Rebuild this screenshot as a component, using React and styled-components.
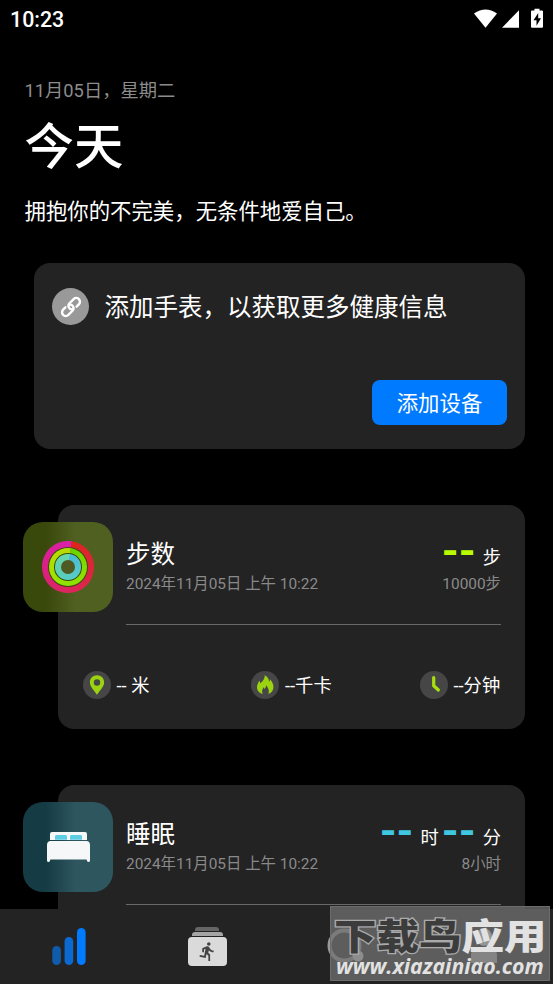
import styled, { createGlobalStyle } from "styled-components";
import { MdDirectionsRun } from "react-icons/md";

const GlobalStyle = createGlobalStyle`
    * {
        box-sizing: border-box;
    }
    body {
        margin: 0;
        background: #000;
    }
`

const Screen = styled.div`
    position: relative;
    display: flex;
    flex-direction: column;
    width: 553px;
    height: 984px;
    overflow: hidden;
    background: #000;
    color: #fff;
    font-family: Roboto, "Noto Sans CJK SC", sans-serif;
    white-space: nowrap;
`

const StatusBar = styled.header`
    display: flex;
    flex: none;
    justify-content: space-between;
    align-items: center;
    height: 38px;
    padding: 0 9px 0 10px;
`
const Clock = styled.span`
    padding-top: 2px;
    font-size: 21.4px;
    font-weight: 500;
    line-height: 36px;
`

const Content = styled.main`
    flex: 1;
    min-height: 0;
    overflow: hidden;
`

const Intro = styled.section`
    padding: 41px 25px 0 24.5px;
`
const DateLine = styled.div`
    height: 24px;
    font-size: 18.3px;
    line-height: 24px;
    color: #8c8c8c;
`
const Title = styled.h1`
    height: 56px;
    margin: 16px 0 0;
    font-size: 49.4px;
    font-weight: 500;
    line-height: 56px;
`
const Quote = styled.p`
    height: 28px;
    margin: 23px 0 0;
    font-size: 21.4px;
    line-height: 28px;
`

const DeviceCard = styled.section`
    display: flex;
    flex-direction: column;
    justify-content: space-between;
    height: 186px;
    margin: 37px 28px 0 34px;
    padding: 25px 18px 24px;
    border-radius: 16px;
    background: #232323;
`
const DeviceRow = styled.div`
    display: flex;
    align-items: center;
    gap: 15.5px;
    height: 37px;
    font-size: 24.5px;
    line-height: 37px;
`
const DeviceText = styled.span`
    padding-top: 1px;
`
const LinkBadge = styled.span`
    display: flex;
    flex: none;
    justify-content: center;
    align-items: center;
    width: 37px;
    height: 37px;
    border-radius: 50%;
    background: #999;
`
const AddButton = styled.button`
    align-self: flex-end;
    width: 135px;
    height: 45px;
    padding: 2px 0 0;
    border: 0;
    border-radius: 8px;
    background: #007aff;
    color: #fff;
    font-family: inherit;
    font-size: 21.4px;
    line-height: 43px;
`

const MetricCard = styled.section`
    height: 224px;
    margin: 56px 28px 0 58px;
    padding: 17px 24px 0 0;
    border-radius: 16px;
    background: #232323;
`
const MetricTop = styled.div`
    display: flex;
    gap: 13px;
    height: 103px;
    margin-left: -35px;
`
const Tile = styled.div`
    display: flex;
    flex: none;
    justify-content: center;
    align-items: center;
    width: 90px;
    height: 90px;
    border-radius: 20px;
    background: linear-gradient(90deg, ${p => p.$from} 0%, ${p => p.$from} 25%, ${p => p.$to} 58%, ${p => p.$to} 100%);
`
const MetricBody = styled.div`
    display: flex;
    flex: 1;
    justify-content: space-between;
    padding-top: 15px;
    border-bottom: 1px solid #686868;
`
const MetricSide = styled.div`
    display: flex;
    flex-direction: column;
    align-items: ${p => p.$right ? "flex-end" : "flex-start"};
`
const MetricName = styled.h2`
    height: 35px;
    margin: 0;
    font-size: 24.5px;
    font-weight: 400;
    line-height: 36px;
`
const MetricNote = styled.div`
    height: 24px;
    font-size: 15.4px;
    line-height: 25px;
    color: #8a8a8a;
`
const MetricValue = styled.div`
    display: flex;
    align-items: center;
    height: 35px;
    font-size: 18.3px;
`
const Unit = styled.span`
    padding-top: 7px;
    line-height: 28px;
`
const Dashes = styled.b`
    margin: 0 7px 8px 3px;
    font-size: 43px;
    line-height: 30px;
    color: ${p => p.$color};
`

const Stats = styled.div`
    display: grid;
    grid-template-columns: 168.5px 168.5px auto;
    padding: 46px 0 0 24.5px;
`
const Stat = styled.div`
    display: flex;
    align-items: center;
    gap: 6px;
    height: 28px;
    font-size: 18.3px;
    line-height: 28px;
`
const StatText = styled.span`
    padding-top: 1px;
`

const Ring = styled.div`
    display: flex;
    flex: none;
    padding: 5.4px;
    border-radius: 50%;
    background: conic-gradient(from 8deg, ${p => p.$colors});
`
const RingGap = styled.div`
    display: flex;
    padding: ${p => p.$hole ? 7.3 : 1.1}px;
    border-radius: 50%;
    background: ${p => p.$hole ? "#4f5a22" : "#3d4812"};
`

const NavBar = styled.nav`
    display: grid;
    flex: none;
    grid-template-columns: repeat(4, 138.25px);
    height: 75px;
    background: #232323;
`
const NavItem = styled.div`
    display: flex;
    justify-content: center;
    align-items: center;
`
const WorkoutIcon = styled.div`
    display: flex;
    flex-direction: column;
    align-items: center;
    gap: 1px;
    width: 39px;
`
const Sheet = styled.span`
    width: ${p => p.$width}px;
    height: 4px;
    border-radius: 3px 3px 0 0;
    background: ${p => p.$color};
`
const Runner = styled.span`
    display: flex;
    justify-content: center;
    align-items: center;
    width: 39px;
    height: 29px;
    border-radius: 4px;
    background: #dadada;
    color: #444;
`

const Watermark = styled.div`
    position: absolute;
    right: 3px;
    bottom: 3px;
    display: flex;
    flex-direction: column;
    width: 220px;
    height: 75px;
    padding: 8px 4px 0 3px;
    background: rgba(114, 114, 114, 0.75);
    border: 1px solid #6c6c6c;
`
const MarkName = styled.div`
    height: 42px;
    font-family: "Noto Sans CJK SC", sans-serif;
    font-size: 42.5px;
    font-weight: 900;
    line-height: 38px;
    color: #e2e2e2;
    transform: scaleY(0.85);
`
const MarkDark = styled.span`
    color: #3c3c3c;
    paint-order: stroke fill;
    -webkit-text-stroke: 3px #aaa;
`
const MarkUrl = styled.div`
    height: 20px;
    padding-left: 2px;
    font-family: "Open Sans", sans-serif;
    font-size: 21.3px;
    font-style: italic;
    font-weight: 700;
    line-height: 18px;
    color: #e2e2e2;
`

const StatusIcons = () => (
    <svg width="71" height="22" viewBox="473 7.5 71 22" fill="#fff">
        <path d="M474 13 Q485.5 4.8 497 13 L485.5 27.2 Z" />
        <path d="M502 27.3 L519 9.8 V27.3 Z" />
        <path fillRule="evenodd" d="M534.5 8.2 H539.5 V10 H542 Q543 10 543 11 V26.3 Q543 27.3 542 27.3 H532 Q531 27.3 531 26.3 V11 Q531 10 532 10 H534.5 Z M538.2 12.6 L533.5 19.8 H536.5 V25.2 L541 17.8 H538.2 Z" />
    </svg>
)

const LinkIcon = () => (
    <svg width="22" height="22" viewBox="-11 -11 22 22" fill="none" stroke="#fff" strokeWidth="2.4" strokeLinecap="round">
        <g transform="rotate(-45)">
            <path d="M4.2 3.7 H7.4 A3.7 3.7 0 0 0 7.4 -3.7 H1.6 A3.7 3.7 0 0 0 -0.6 2.9" />
            <path d="M-4.2 -3.7 H-7.4 A3.7 3.7 0 0 0 -7.4 3.7 H-1.6 A3.7 3.7 0 0 0 0.6 -2.9" />
        </g>
    </svg>
)

const ActivityRings = () => (
    <Ring $colors="#dc251c, #dc2640 100deg, #dc2660 180deg, #da2080 250deg, #da20b0">
        <RingGap>
            <Ring $colors="#68d000, #88df00 100deg, #92e400 200deg, #b4df00 300deg, #b8d800">
                <RingGap>
                    <Ring $colors="#48b8d8, #55c7cc 100deg, #58ccc0 180deg, #68d8a8">
                        <RingGap $hole />
                    </Ring>
                </RingGap>
            </Ring>
        </RingGap>
    </Ring>
)

const BedIcon = () => (
    <svg width="43" height="30" viewBox="0 0 43 30">
        <path d="M3 8 V2 Q3 0 5 0 H38 Q40 0 40 2 V8 Z" fill="#f5f7f8" />
        <path d="M8 7.8 V4.4 Q8 3 9.6 3 H18.4 Q20 3 20 4.4 V7.8 Z M23 7.8 V4.4 Q23 3 24.6 3 H33.4 Q35 3 35 4.4 V7.8 Z" fill="#5dcde3" />
        <path d="M3 9 H40 Q43 9.4 43 13 V28.5 Q43 30 41.5 30 Q40 30 39.6 27.5 H3.4 Q3 30 1.5 30 Q0 30 0 28.5 V13 Q0 9.4 3 9 Z" fill="#f5f7f8" />
    </svg>
)

const StatIcon = ({ children }) => (
    <svg width="28" height="28" viewBox="0 0 28 28">
        <circle cx="14" cy="14" r="14" fill="#464646" />
        {children}
    </svg>
)

const PinIcon = () => (
    <StatIcon>
        <path fillRule="evenodd" fill="#9cd311" d="M14 4.3 C9.8 4.3 6.9 7.4 6.9 11.3 C6.9 15.8 11 19.6 14 23.7 C17 19.6 21.1 15.8 21.1 11.3 C21.1 7.4 18.2 4.3 14 4.3 Z M14 8.3 A3.2 3.2 0 1 1 14 14.7 A3.2 3.2 0 1 1 14 8.3 Z" />
    </StatIcon>
)

const FlameIcon = () => (
    <StatIcon>
        <path fill="#9cd311" d="M13.8 4.2 C17.2 6.3 18.2 8.6 18 11 C18.8 10.3 19 9.3 18.9 8.3 C21.5 11 22.9 14 22.4 17 C22 20 20.2 22 17.5 23 C18.4 19.5 17.5 16.8 15 14.3 C15 16.2 14.5 17.2 13.4 18 C13 17.5 12.9 16.8 13 16 C11 18.2 10.7 20.3 11.6 23 C8 21.8 5.8 19.3 6 16 C6.1 13.6 7.4 12 8.1 9.8 C8.9 10.5 9.2 11.3 9.2 12.3 C12 10.2 13.8 7.8 13.8 4.2 Z" />
    </StatIcon>
)

const ClockIcon = () => (
    <StatIcon>
        <path d="M13.7 6.6 V14.7 L18.4 19" fill="none" stroke="#a8df0c" strokeWidth="3.2" strokeLinecap="round" strokeLinejoin="round" />
    </StatIcon>
)

const BarsIcon = () => (
    <svg width="34" height="37" viewBox="0 0 34 37">
        <rect x="0.3" y="18" width="8.6" height="19" rx="4.3" fill="#105bab" />
        <rect x="12.6" y="9" width="8.6" height="28" rx="4.3" fill="#0b69d2" />
        <rect x="25" y="0" width="8.6" height="37" rx="4.3" fill="#007aff" />
    </svg>
)

const WatchIcon = () => (
    <svg width="38" height="38" viewBox="0 0 38 38">
        <circle cx="17.5" cy="17.5" r="15" fill="none" stroke="#999" strokeWidth="4" />
        <circle cx="31" cy="28" r="5.5" fill="#ddd" />
    </svg>
)

const ProfileIcon = () => (
    <svg width="26" height="38" viewBox="0 0 26 38" fill="#fff">
        <ellipse cx="13" cy="9" rx="8" ry="9" />
        <path d="M0 35 V28 Q0 20 8 20 H18 Q26 20 26 28 V35 Z" opacity="0.7" />
    </svg>
)

const Metric = ({ name, goal, tile, icon, value, children }) => (
    <MetricCard>
        <MetricTop>
            <Tile $from={tile[0]} $to={tile[1]}>{icon}</Tile>
            <MetricBody>
                <MetricSide>
                    <MetricName>{name}</MetricName>
                    <MetricNote>2024年11月05日 上午 10:22</MetricNote>
                </MetricSide>
                <MetricSide $right>
                    <MetricValue>{value}</MetricValue>
                    <MetricNote>{goal}</MetricNote>
                </MetricSide>
            </MetricBody>
        </MetricTop>
        {children}
    </MetricCard>
)

const App = () => {
    return (
        <Screen>
            <GlobalStyle />
            <StatusBar>
                <Clock>10:23</Clock>
                <StatusIcons />
            </StatusBar>
            <Content>
                <Intro>
                    <DateLine>11月05日，星期二</DateLine>
                    <Title>今天</Title>
                    <Quote>拥抱你的不完美，无条件地爱自己。</Quote>
                </Intro>
                <DeviceCard>
                    <DeviceRow>
                        <LinkBadge><LinkIcon /></LinkBadge>
                        <DeviceText>添加手表，以获取更多健康信息</DeviceText>
                    </DeviceRow>
                    <AddButton>添加设备</AddButton>
                </DeviceCard>
                <Metric
                    name="步数"
                    goal="10000步"
                    tile={["#39480b", "#506021"]}
                    icon={<ActivityRings />}
                    value={<><Dashes $color="#b9fb00">--</Dashes><Unit>步</Unit></>}
                >
                    <Stats>
                        <Stat><PinIcon /><StatText>-- 米</StatText></Stat>
                        <Stat><FlameIcon /><StatText>--千卡</StatText></Stat>
                        <Stat><ClockIcon /><StatText>--分钟</StatText></Stat>
                    </Stats>
                </Metric>
                <Metric
                    name="睡眠"
                    goal="8小时"
                    tile={["#153b44", "#2e565e"]}
                    icon={<BedIcon />}
                    value={<>
                        <Dashes $color="#3fc6e0">--</Dashes><Unit>时</Unit>
                        <Dashes $color="#3fc6e0">--</Dashes><Unit>分</Unit>
                    </>}
                />
            </Content>
            <NavBar>
                <NavItem><BarsIcon /></NavItem>
                <NavItem>
                    <WorkoutIcon>
                        <Sheet $width={24} $color="#666" />
                        <Sheet $width={31} $color="#a5a5a5" />
                        <Runner><MdDirectionsRun size={21} /></Runner>
                    </WorkoutIcon>
                </NavItem>
                <NavItem><WatchIcon /></NavItem>
                <NavItem><ProfileIcon /></NavItem>
            </NavBar>
            <Watermark>
                <MarkName><MarkDark>下载鸟</MarkDark>应用</MarkName>
                <MarkUrl>www.xiazainiao.com</MarkUrl>
            </Watermark>
        </Screen>
    );
}

export default App;
